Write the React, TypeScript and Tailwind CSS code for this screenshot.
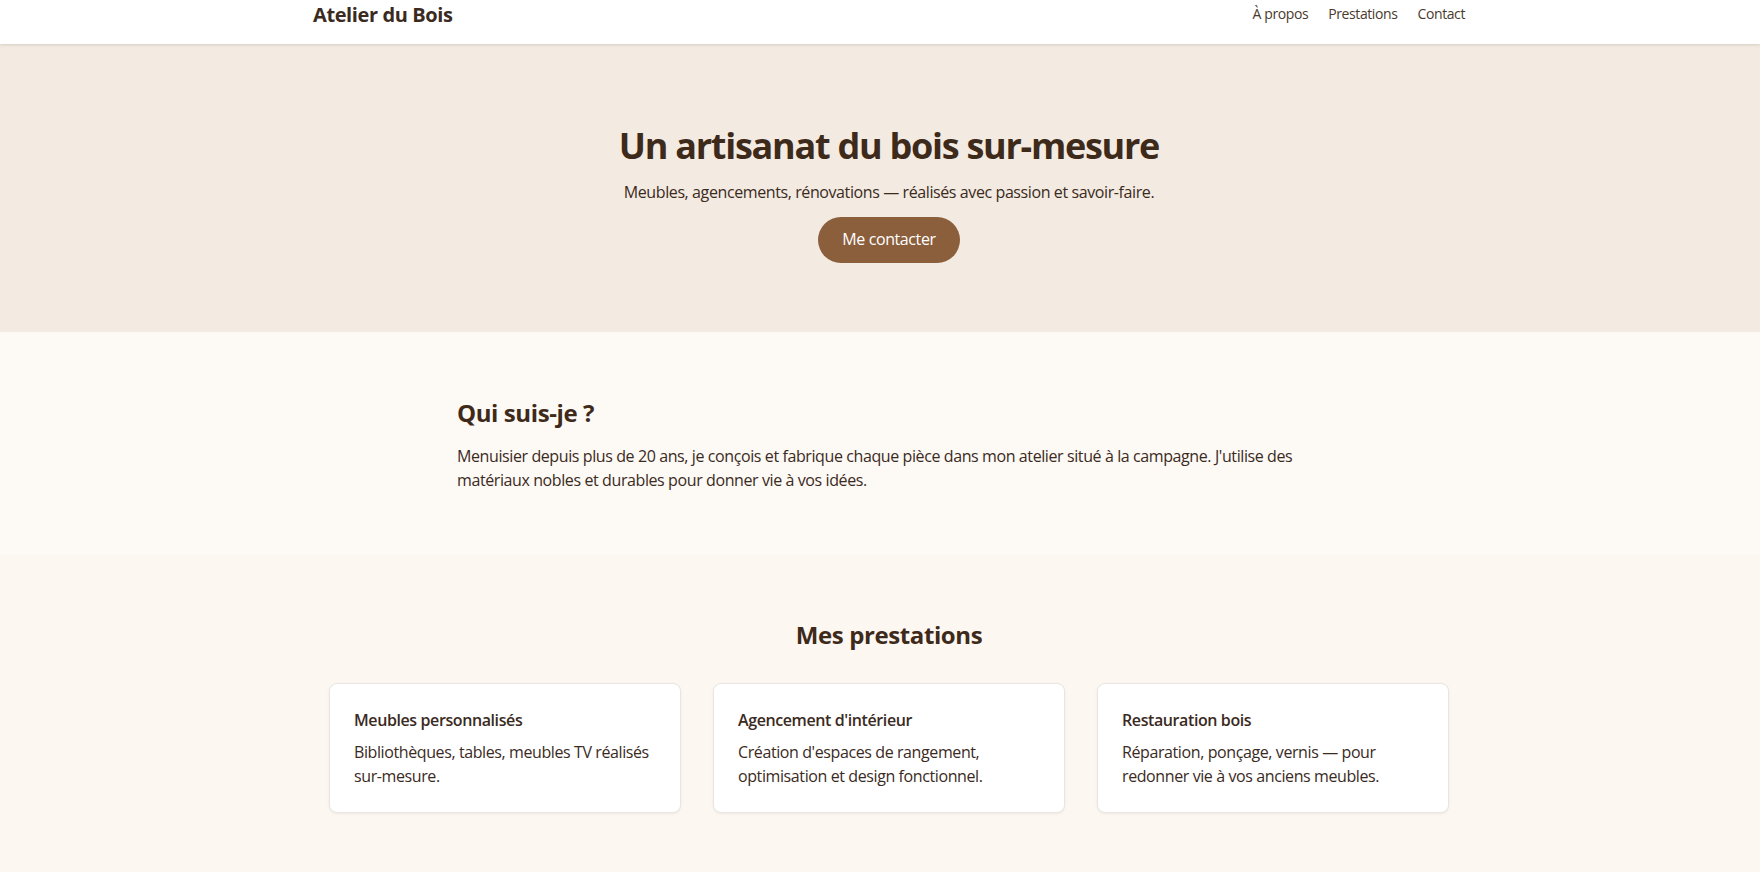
const services = [
  {
    title: "Meubles personnalisés",
    text: "Bibliothèques, tables, meubles TV réalisés sur-mesure.",
  },
  {
    title: "Agencement d'intérieur",
    text: "Création d'espaces de rangement, optimisation et design fonctionnel.",
  },
  {
    title: "Restauration bois",
    text: "Réparation, ponçage, vernis — pour redonner vie à vos anciens meubles.",
  },
];

export default function App() {
  return (
    <div className="min-h-screen bg-[#fcf7f1] text-[#3b2a1e] font-['Segoe_UI','Open_Sans',sans-serif] leading-[1.6] tracking-[-0.025em]">
      {/* Header */}
      <header className="bg-white shadow-[0_1px_3px_rgba(0,0,0,0.12)] relative z-10 pl-[18px]">
        <div className="max-w-6xl mx-auto h-[44px] flex items-start justify-between">
          <a className="text-xl font-bold text-[#3b2a1e] leading-[30px]">Atelier du Bois</a>
          <nav className="flex gap-5 text-sm text-[#4a3a2e] leading-[28px]">
            <a>À propos</a>
            <a>Prestations</a>
            <a>Contact</a>
          </nav>
        </div>
      </header>

      {/* Hero */}
      <section className="bg-[#f3eae1] pt-20 pb-[69px] pl-[18px] text-center">
        <h1 className="text-4xl font-bold leading-[1.2] tracking-[-0.035em] text-[#3e2a1b] mb-[13px]">
          Un artisanat du bois sur-mesure
        </h1>
        <p className="text-base mb-[13px] text-[#3b2a1e]">
          Meubles, agencements, rénovations — réalisés avec passion et savoir-faire.
        </p>
        <button className="bg-[#8b5e3c] text-white rounded-full px-6 py-2.5 text-base leading-[1.6]">
          Me contacter
        </button>
      </section>

      {/* About */}
      <section className="bg-[#fdf9f4] pt-[65px] pb-[63px] pl-[18px]">
        <div className="max-w-4xl mx-auto px-4">
          <h2 className="text-2xl font-bold leading-8 mb-[15px] text-[#3e2a1b]">Qui suis-je ?</h2>
          <p className="text-base">
            Menuisier depuis plus de 20 ans, je conçois et fabrique chaque pièce dans mon atelier
            situé à la campagne. J'utilise des matériaux nobles et durables pour donner vie à vos
            idées.
          </p>
        </div>
      </section>

      {/* Services */}
      <section className="pt-[64px] pb-16 pl-[18px]">
        <div className="max-w-6xl mx-auto px-4">
          <h2 className="text-2xl font-bold leading-8 mb-8 text-center text-[#3e2a1b]">
            Mes prestations
          </h2>
          <div className="grid grid-cols-3 gap-8">
            {services.map((s) => (
              <div
                key={s.title}
                className="bg-white border border-[#ebe5de] rounded-lg p-6 shadow-[0_1px_3px_rgba(0,0,0,0.06)]"
              >
                <h3 className="text-base font-semibold mb-2 text-[#3b2a1e]">{s.title}</h3>
                <p className="text-base text-[#3b2a1e]">{s.text}</p>
              </div>
            ))}
          </div>
        </div>
      </section>
    </div>
  );
}
